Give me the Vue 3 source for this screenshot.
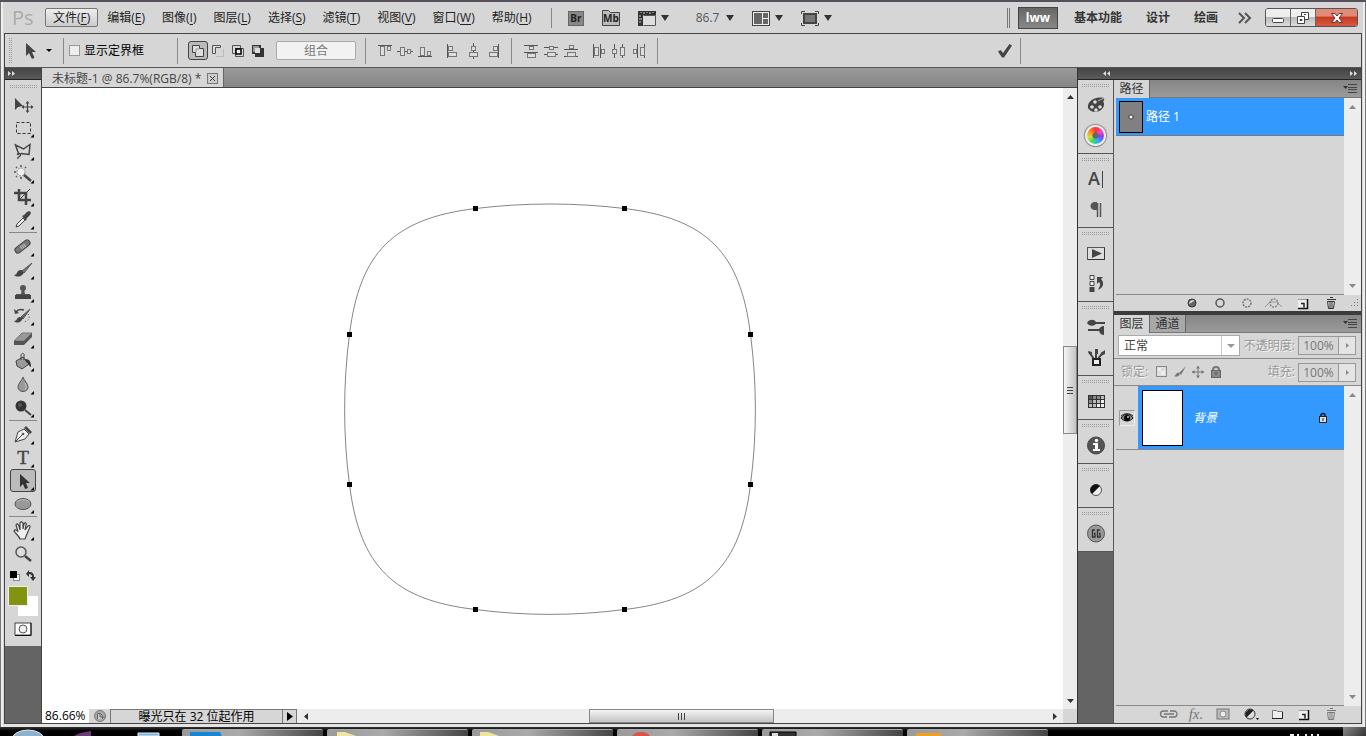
<template>
  <div class="screen">
    <div class="window">
      <header class="menubar">
        <span class="logo">Ps</span>
        <nav class="menus">
          <button v-for="(m, i) in menus" :key="m.key" class="menu" :class="{ active: i === 0 }">{{ m.name }}(<u>{{ m.key }}</u>)</button>
        </nav>
        <i class="vline"></i>
        <div class="app-tools">
          <button class="plain" aria-label="Bridge">
            <svg width="18" height="18" viewBox="0 0 18 18">
              <rect x="1.500" y="2.500" width="15" height="14" fill="#888" stroke="#666" />
              <text x="9" y="13" class="badge-text">Br</text>
            </svg>
          </button>
          <button class="plain" aria-label="Mini Bridge">
            <svg width="18" height="18" viewBox="0 0 18 18">
              <path d="M.5 16.500V1.500h6l2 2h9v13z" fill="#bbb" stroke="#444" />
              <text x="9" y="13" class="badge-text">Mb</text>
            </svg>
          </button>
          <button class="plain with-arrow" aria-label="查看额外内容">
            <svg width="20" height="18" viewBox="0 0 20 18">
              <path d="M1 2h18v4H6v11H1z" fill="#333" />
              <path d="M6.500 6.500h12v10h-12" fill="#ddd" stroke="#555" />
              <path d="M4 3v1M7 3v2M10 3v1M13 3v2M16 3v1M2 7h2M2 10h3M2 13h2" stroke="#ccc" />
            </svg>
            <svg width="8" height="6" viewBox="0 0 8 6"><path d="M0 0h8L4 6z" fill="#333" /></svg>
          </button>
          <label class="zoom-box">
            <select v-model="zoom" aria-label="缩放级别">
              <option>86.7</option>
              <option>100</option>
            </select>
            <svg width="8" height="6" viewBox="0 0 8 6"><path d="M0 0h8L4 6z" fill="#333" /></svg>
          </label>
          <button class="plain with-arrow" aria-label="排列文档">
            <svg width="20" height="18" viewBox="0 0 20 18">
              <rect x="1.500" y="2.500" width="17" height="14" fill="#eee" stroke="#444" />
              <path d="M3 4h8v11H3zM12 4h5v5h-5zM12 10h5v5h-5z" fill="#666" />
            </svg>
            <svg width="8" height="6" viewBox="0 0 8 6"><path d="M0 0h8L4 6z" fill="#333" /></svg>
          </button>
          <button class="plain with-arrow" aria-label="屏幕模式">
            <svg width="20" height="18" viewBox="0 0 20 18">
              <rect x="4" y="5" width="12" height="9" fill="#777" stroke="#444" stroke-width="2" />
              <path d="M1.500 5V2.500H5M15 2.500h3.500V5M18.500 14v2.500H15M5 16.500H1.500V14" fill="none" stroke="#444" />
            </svg>
            <svg width="8" height="6" viewBox="0 0 8 6"><path d="M0 0h8L4 6z" fill="#333" /></svg>
          </button>
        </div>
        <div class="workspaces">
          <i class="double-line"></i>
          <button
            v-for="w in workspaces"
            :key="w"
            class="workspace-btn"
            :class="{ active: workspace === w }"
            @click="workspace = w"
          >{{ w }}</button>
          <button class="plain more" aria-label="更多工作区">
            <svg width="16" height="12" viewBox="0 0 16 12"><path d="M2 1l5 5-5 5M8 1l5 5-5 5" fill="none" stroke="#555" stroke-width="2" /></svg>
          </button>
        </div>
        <div class="win-controls">
          <button class="win-btn" aria-label="最小化">
            <svg width="14" height="12" viewBox="0 0 14 12"><rect x="1.500" y="6.500" width="11" height="4" rx="1" fill="#fff" stroke="#444" /></svg>
          </button>
          <button class="win-btn" aria-label="还原">
            <svg width="14" height="14" viewBox="0 0 14 14">
              <path d="M5.500 1.500h7v7h-7z" fill="#fff" stroke="#444" />
              <path d="M1.500 5.500h7v7h-7z" fill="#fff" stroke="#444" />
              <path d="M4 8.500h2v1H4zM8 3.500h2" stroke="#444" fill="none" />
            </svg>
          </button>
          <button class="win-btn close" aria-label="关闭">
            <svg width="14" height="12" viewBox="0 0 14 12"><path d="M1.500 1.500h3.500l2 2.500 2-2.500h3.500L9 6l3.500 4.500H9L7 8l-2 2.500H1.500L5 6z" fill="#fff" stroke="#633" /></svg>
          </button>
        </div>
      </header>

      <div class="frame">
        <div class="options">
          <i class="grip-v"></i>
          <button class="plain tool-picker" aria-label="工具预设">
            <svg width="14" height="18" viewBox="0 0 14 18"><path d="M3 1v13l3-3 3 6 2.500-1.200L9 10h4z" fill="#444" /></svg>
            <svg width="6" height="3" viewBox="0 0 6 3"><path d="M0 0h6L3 3z" /></svg>
          </button>
          <i class="vline"></i>
          <label class="check">
            <input v-model="showBounds" type="checkbox" />
            <span>显示定界框</span>
          </label>
          <i class="vline"></i>
          <div class="icon-row">
            <button v-for="(ic, i) in pathOps" :key="i" class="op-btn" :class="{ active: i === 0 }" :aria-label="ic.name">
              <svg width="16" height="16" viewBox="0 0 16 16" v-html="ic.body"></svg>
            </button>
          </div>
          <button class="combine">组合</button>
          <i class="vline"></i>
          <template v-for="(set, s) in alignSets" :key="s">
            <div class="align-row" :class="{ last: s % 2 === 1 }">
              <button v-for="(body, i) in set" :key="i" class="op-btn" aria-label="对齐">
                <svg width="16" height="16" viewBox="0 0 16 16" v-html="body"></svg>
              </button>
            </div>
            <i v-if="s % 2 === 1" class="vline"></i>
          </template>
          <div class="commit">
            <button class="plain" aria-label="提交">
              <svg width="16" height="16" viewBox="0 0 16 16"><path d="M1 8.500L3.500 7 6 10l6.500-9L15 2.500 7 14.500H5z" fill="#444" /></svg>
            </button>
            <i class="vline"></i>
          </div>
        </div>

        <div class="body">
          <aside class="toolbox">
            <div class="dark-head"><svg width="8" height="5" viewBox="0 0 8 5"><path d="M0 0l3 2.500L0 5zM4 0l3 2.500L4 5z" fill="#ddd" /></svg></div>
            <div class="tools">
              <i class="grip-h"></i>
              <template v-for="(t, i) in tools" :key="i">
                <hr v-if="t.sep" />
                <button v-else class="tool" :class="{ active: t.active }" :aria-label="t.name">
                  <svg width="24" height="20" viewBox="0 0 24 20">
                    <g v-html="t.body"></g>
                    <path v-if="!t.single" d="M23 16v3.500h-3.500z" fill="#000" />
                  </svg>
                </button>
              </template>
              <button class="plain" aria-label="前景色和背景色">
                <svg width="32" height="54" viewBox="0 0 32 54">
                  <rect x="6.500" y="9.500" width="6" height="6" fill="#fff" stroke="#888" />
                  <rect x="3" y="6" width="7" height="7" fill="#000" />
                  <path d="M19 9l3-4v2c4 0 5 2 5 5h2l-3 4-3-4h2c0-2-1-3-3-3v3z" fill="#333" />
                  <rect x="11" y="31" width="20" height="20" fill="#fff" />
                  <rect x="1.500" y="21.500" width="19" height="19" fill="#82930f" stroke="#eee" />
                </svg>
              </button>
              <button class="plain mask" aria-label="快速蒙版">
                <svg width="18" height="14" viewBox="0 0 18 14">
                  <rect x="1" y="1" width="16" height="12" fill="#fff" stroke="#444" />
                  <path d="M17 1v12.500H1" fill="none" stroke="#111" />
                  <circle cx="9" cy="7" r="4" fill="#eee" stroke="#555" />
                </svg>
              </button>
            </div>
          </aside>

          <main class="document">
            <div class="doc-tabs">
              <div class="doc-tab">
                <span>未标题-1 @ 86.7%(RGB/8) *</span>
                <button class="plain" aria-label="关闭文档">
                  <svg width="11" height="11" viewBox="0 0 11 11"><rect x=".5" y=".5" width="10" height="10" fill="#ccc" stroke="#777" /><path d="M3 3l5 5M8 3l-5 5" stroke="#444" /></svg>
                </button>
              </div>
            </div>
            <div class="canvas-row">
              <svg class="canvas">
                <g transform="translate(-42 -88)">
                  <path :d="outline" fill="none" stroke="#666" stroke-width=".8" />
                  <rect v-for="(p, i) in anchors" :key="i" :x="p[0] - 2" :y="p[1] - 2" width="5" height="5" />
                </g>
              </svg>
              <div class="scroll-v">
                <button class="plain" aria-label="向上"><svg width="7" height="4" viewBox="0 0 7 4"><path d="M0 4h7L3.500 0z" fill="#333" /></svg></button>
                <div class="track-v"><div class="thumb-v"><i></i></div></div>
                <button class="plain" aria-label="向下"><svg width="7" height="4" viewBox="0 0 7 4"><path d="M0 0h7L3.500 4z" fill="#333" /></svg></button>
              </div>
            </div>
            <div class="status">
              <input v-model="zoomText" class="zoom-input" aria-label="缩放" />
              <span class="status-icon">
                <svg width="12" height="12" viewBox="0 0 12 12"><circle cx="6" cy="6" r="5.500" fill="#aaa" stroke="#777" /><path d="M3.500 9V3.500h3l2 2V9M6 4v3h5" fill="#ccc" stroke="#666" /></svg>
              </span>
              <span class="status-text">曝光只在 32 位起作用</span>
              <button class="status-arrow" aria-label="状态选项"><svg width="6" height="9" viewBox="0 0 6 9"><path d="M0 0v9l6-4.500z" /></svg></button>
              <div class="scroll-h">
                <button class="plain" aria-label="向左"><svg width="4" height="7" viewBox="0 0 4 7"><path d="M4 0v7L0 3.500z" fill="#333" /></svg></button>
                <div class="track-h"><div class="thumb-h"><i></i></div></div>
                <button class="plain" aria-label="向右"><svg width="4" height="7" viewBox="0 0 4 7"><path d="M0 0v7l4-3.500z" fill="#333" /></svg></button>
              </div>
              <i class="corner"></i>
            </div>
          </main>

          <aside class="right">
            <div class="dark-head right-head">
              <svg width="8" height="5" viewBox="0 0 8 5"><path d="M3 0v5L0 2.500zM7 0v5L4 2.500z" fill="#ddd" /></svg>
              <svg width="8" height="5" viewBox="0 0 8 5"><path d="M0 0l3 2.500L0 5zM4 0l3 2.500L4 5z" fill="#ddd" /></svg>
            </div>
            <div class="right-body">
              <div class="dock">
                <div v-for="(g, i) in dock" :key="i" class="dock-group">
                  <i class="grip-h"></i>
                  <button v-for="d in g" :key="d.name" class="dock-btn" :aria-label="d.name">
                    <i v-if="d.wheel" class="wheel"></i>
                    <svg v-else width="20" height="20" viewBox="0 0 20 20" v-html="d.body"></svg>
                  </button>
                </div>
              </div>

              <div class="panels">
                <section class="panel paths">
                  <div class="tabs">
                    <button class="tab active">路径</button>
                    <button class="plain panel-menu" aria-label="面板菜单"><svg width="14" height="9" viewBox="0 0 14 9"><path d="M0 2h5L2.500 5z" fill="#333" /><path d="M5 .5h9M5 3.500h9M5 5.500h9M5 8.500h9" stroke="#444" /></svg></button>
                  </div>
                  <div class="list-row">
                    <div class="list">
                      <div class="path-item">
                        <svg width="24" height="32" viewBox="0 0 24 32"><rect x=".5" y=".5" width="23" height="31" fill="#808080" stroke="#000" /><path d="M12 13.500l2.500 2.500-2.500 2.500L9.500 16z" fill="#fff" stroke="#222" /></svg>
                        <span>路径 1</span>
                      </div>
                    </div>
                    <div class="panel-scroll">
                      <svg width="7" height="4" viewBox="0 0 7 4"><path d="M0 4h7L3.500 0z" fill="#888" /></svg>
                      <svg width="7" height="4" viewBox="0 0 7 4"><path d="M0 0h7L3.500 4z" fill="#888" /></svg>
                    </div>
                  </div>
                  <div class="panel-foot">
                    <button v-for="(b, i) in pathFoot" :key="i" class="plain" aria-label="路径操作"><svg width="20" height="14" viewBox="0 0 20 14" v-html="b"></svg></button>
                    <svg width="10" height="10" viewBox="0 0 10 10"><path d="M8 1h1v1H8zM8 4h1v1H8zM5 4h1v1H5zM8 7h1v1H8zM5 7h1v1H5zM2 7h1v1H2z" fill="#777" /></svg>
                  </div>
                </section>

                <section class="panel layers">
                  <div class="tabs">
                    <button class="tab active">图层</button>
                    <button class="tab">通道</button>
                    <button class="plain panel-menu" aria-label="面板菜单"><svg width="14" height="9" viewBox="0 0 14 9"><path d="M0 2h5L2.500 5z" fill="#333" /><path d="M5 .5h9M5 3.500h9M5 5.500h9M5 8.500h9" stroke="#444" /></svg></button>
                  </div>
                  <div class="prop-row">
                    <div class="blend">
                      <select v-model="blend" aria-label="混合模式">
                        <option>正常</option>
                        <option>溶解</option>
                      </select>
                      <span class="blend-arrow"><svg width="8" height="4" viewBox="0 0 8 4"><path d="M0 0h8L4 4z" fill="#999" /></svg></span>
                    </div>
                    <label class="field">
                      <span>不透明度:</span>
                      <input value="100%" disabled />
                      <b><svg width="3" height="5" viewBox="0 0 3 5"><path d="M0 0v5l3-2.500z" fill="#888" /></svg></b>
                    </label>
                  </div>
                  <div class="prop-row lock-row">
                    <span class="faded">锁定:</span>
                    <div class="locks">
                      <button v-for="(b, i) in locks" :key="i" class="plain" aria-label="锁定选项"><svg width="14" height="14" viewBox="0 0 14 14" v-html="b"></svg></button>
                    </div>
                    <label class="field">
                      <span>填充:</span>
                      <input value="100%" disabled />
                      <b><svg width="3" height="5" viewBox="0 0 3 5"><path d="M0 0v5l3-2.500z" fill="#888" /></svg></b>
                    </label>
                  </div>
                  <div class="list-row">
                    <div class="list">
                      <div class="layer-item">
                        <button class="eye" aria-label="可见性">
                          <svg width="16" height="16" viewBox="0 0 16 16">
                            <path d="M.5 15.500V.5h15" fill="none" stroke="#999" />
                            <path d="M15.500 1v14.500H1" fill="none" stroke="#eee" />
                            <path d="M2 8c3-5 9-5 12 0-3 4-9 4-12 0z" fill="#888" stroke="#111" />
                            <circle cx="8" cy="8" r="3" fill="#000" />
                            <circle cx="9" cy="7" r="1" fill="#ccc" />
                            <path d="M2 6c3-3 9-3 12 0" fill="none" stroke="#222" />
                          </svg>
                        </button>
                        <div class="layer-main">
                          <i class="thumb"></i>
                          <em>背景</em>
                          <svg width="10" height="11" viewBox="0 0 10 11"><path d="M3 5V3.500a2 2 0 0 1 4 0V5" fill="none" stroke="#113" stroke-width="1.500" /><rect x="1.500" y="4.500" width="7" height="6" fill="#ddd" stroke="#222" /><path d="M5 6v3" stroke="#222" /></svg>
                        </div>
                      </div>
                    </div>
                    <div class="panel-scroll">
                      <svg width="7" height="4" viewBox="0 0 7 4"><path d="M0 4h7L3.500 0z" fill="#888" /></svg>
                      <svg width="7" height="4" viewBox="0 0 7 4"><path d="M0 0h7L3.500 4z" fill="#888" /></svg>
                    </div>
                  </div>
                  <div class="panel-foot layer-foot">
                    <button class="plain" aria-label="链接图层"><svg width="20" height="14" viewBox="0 0 20 14" v-html="linkIcon"></svg></button>
                    <button class="fx" aria-label="图层样式">fx.</button>
                    <button v-for="(b, i) in layerFoot" :key="i" class="plain" aria-label="图层操作"><svg width="20" height="14" viewBox="0 0 20 14" v-html="b"></svg></button>
                  </div>
                </section>
              </div>
            </div>
          </aside>
        </div>
      </div>
    </div>

    <footer class="taskbar">
      <svg width="178" height="9" viewBox="0 0 178 9">
        <ellipse cx="28" cy="14" rx="17" ry="11" fill="#8fb0cc" stroke="#dde8f0" />
        <path d="M74 9c5-3 10-4 17-5v5z" fill="#6d3a78" />
        <path d="M138 6h21v3h-21z" fill="#7fb4dc" stroke="#e4f0fa" />
      </svg>
      <div v-for="(t, i) in tasks" :key="i" class="task">
        <svg width="40" height="7" viewBox="0 0 40 7" v-html="t"></svg>
      </div>
      <div class="tray">
        <svg width="32" height="9" viewBox="0 0 32 9"><path d="M1 8h4M8 8h2M16 8h2M22 8h2M28 8h2" stroke="#eee" stroke-width="2" /></svg>
        <i class="show-desktop"></i>
      </div>
    </footer>
  </div>
</template>

<script setup>
import { ref } from 'vue'

const zoom = ref('86.7')
const zoomText = ref('86.66%')
const showBounds = ref(false)
const blend = ref('正常')
const workspace = ref('lww')

const workspaces = ['lww', '基本功能', '设计', '绘画']

const menus = [
  { name: '文件', key: 'F' },
  { name: '编辑', key: 'E' },
  { name: '图像', key: 'I' },
  { name: '图层', key: 'L' },
  { name: '选择', key: 'S' },
  { name: '滤镜', key: 'T' },
  { name: '视图', key: 'V' },
  { name: '窗口', key: 'W' },
  { name: '帮助', key: 'H' },
]

const pathOps = [
  { name: '添加', body: '<path d="M2.500 2.500h7v3h4v8h-8v-4h-3z" fill="#ddd" stroke="#444"/><path d="M6 9V6h3" fill="none" stroke="#999"/>' },
  { name: '减去', body: '<path d="M2.500 10.500v-8h8v2h-5v6z" fill="#ddd" stroke="#555"/><path d="M6 13.500h7.500V6" fill="none" stroke="#bbb"/>' },
  { name: '交叉', body: '<path d="M2.500 2.500h8v8h-8zM5.500 5.500h8v8h-8z" fill="none" stroke="#555"/><rect x="6" y="6" width="5" height="5" fill="#eee" stroke="#000" stroke-width="1.500"/>' },
  { name: '排除', body: '<path d="M2 2h9v3h3v9H5v-3H2z" fill="#333"/><rect x="5" y="5" width="5" height="5" fill="#ddd"/><path d="M3 3h6v2H5v4H3z" fill="#999"/>' },
]

const box = (x, y, w, h) => `<rect x="${x}.5" y="${y}.5" width="${w}" height="${h}" fill="#ddd" stroke="#777"/>`
const line = (d) => `<path d="${d}" stroke="#555" fill="none"/>`

const alignSets = [
  [
    line('M1 2.500h14') + box(3, 3, 4, 9) + box(10, 3, 3, 4),
    line('M0 8.500h16') + box(3, 4, 4, 8) + box(10, 6, 3, 4),
    line('M1 13.500h14') + box(3, 4, 4, 8) + box(10, 8, 3, 4),
  ],
  [
    line('M2.500 1v14') + box(3, 3, 4, 4) + box(3, 9, 8, 4),
    line('M8.500 0v16') + box(6, 3, 4, 4) + box(4, 9, 8, 4),
    line('M13.500 1v14') + box(8, 3, 4, 4) + box(4, 9, 8, 4),
  ],
  [
    line('M1 2.500h14M1 9.500h14') + box(6, 3, 4, 3) + box(4, 10, 8, 4),
    line('M1 4.500h14M1 11.500h14') + box(6, 3, 4, 3) + box(4, 9, 8, 4),
    line('M1 6.500h14M1 13.500h14') + box(6, 2, 4, 3) + box(4, 9, 8, 4),
  ],
  [
    line('M2.500 1v14M9.500 1v14') + box(3, 4, 4, 8) + box(10, 6, 3, 4),
    line('M3.500 1v14M11.500 1v14') + box(1, 6, 4, 4) + box(9, 4, 4, 8),
    line('M6.500 1v14M13.500 1v14') + box(2, 6, 3, 4) + box(9, 4, 4, 8),
  ],
]

const tools = [
  { name: '移动', single: true, body: '<path d="M4 3v12l3-3 5-1z" fill="#444"/><path d="M16.500 7v10M11.500 12h10" stroke="#444" stroke-width="1.200"/><path d="M14.500 8.500l2-2.500 2 2.500zM14.500 15.500l2 2.500 2-2.500zM13 10l-2.500 2 2.500 2zM20 10l2.500 2-2.500 2z" fill="#444"/>' },
  { name: '矩形选框', body: '<rect x="5.500" y="4.500" width="14" height="11" fill="none" stroke="#333" stroke-dasharray="3 2"/>' },
  { name: '套索', body: '<path d="M8 14L4.500 4l8 4 6.500-4.500-1 10-8-1" fill="none" stroke="#444" stroke-width="1.500"/><path d="M6 14c2-3 5-1 3 1s-3 1-2 3" fill="none" stroke="#444" stroke-width="1.300"/>' },
  { name: '魔棒', body: '<path d="M12 10l8 7" stroke="#444" stroke-width="2.500"/><circle cx="10" cy="8" r="4" fill="#eee" stroke="#888" stroke-dasharray="2 1"/><path d="M10 1v2M10 13v2M3 8h2M5 3l1 1M15 3l-1 1M5 13l1-1" stroke="#555" stroke-width="1.500"/>' },
  { name: '裁剪', body: '<path d="M8 2v11h12M3 6h12v12" fill="none" stroke="#444" stroke-width="2.500"/><path d="M8 13L19 2" stroke="#444"/>' },
  { name: '吸管', body: '<path d="M5 17l1-3 6-6 2 2-6 6z" fill="#eee" stroke="#444"/><path d="M11 6l2-1 3-3c3-2 5 1 3 3l-3 3-1 3z" fill="#444"/>' },
  { sep: true },
  { name: '修复画笔', body: '<path d="M7 13l9-7" stroke="#444" stroke-width="7" stroke-linecap="round"/><path d="M7 13l9-7" stroke="#777" stroke-width="5" stroke-linecap="round"/><path d="M10 11l4-3" stroke="#bbb" stroke-width="4" stroke-dasharray="1 1"/>' },
  { name: '画笔', body: '<path d="M3 15c4 0 2-5 7-5 3 0 4 3 1 5-2 2-6 2-8 0z" fill="#444"/><path d="M11 11l10-8-8 10z" fill="#777" stroke="#555"/>' },
  { name: '图章', body: '<circle cx="12" cy="5" r="3" fill="#555"/><path d="M11 6h2l1 5h5v3H5v-3h5z" fill="#555"/><path d="M4 12h16v4H4z" fill="#444"/>' },
  { name: '历史画笔', body: '<path d="M3 15c4 0 2-4 6-4 3 0 3 3 1 4-2 2-5 2-7 0z" fill="#444"/><path d="M10 11l9-8-7 10z" fill="#666" stroke="#555"/><path d="M5 6c2-3 5-3 8-2" fill="none" stroke="#444" stroke-width="1.500"/><path d="M3 3l1 5 4-1z" fill="#444"/><path d="M17 8c3 4 0 7-4 8" fill="none" stroke="#555" stroke-dasharray="1 2"/>' },
  { name: '橡皮擦', body: '<path d="M3 12l8-8h10l-8 8z" fill="#999" stroke="#777"/><path d="M3 12h10v4H3zM13 12l8-8v4l-8 8z" fill="#555"/>' },
  { name: '油漆桶', body: '<path d="M5 9l7-4 6 7-7 5-5-3z" fill="#999" stroke="#444"/><path d="M10 8V4c0-4 4-3 3 0v4" fill="none" stroke="#444"/><path d="M14 7c5 0 6 3 6 8-3-1-2-4-5-5z" fill="#333"/>' },
  { name: '模糊', body: '<path d="M12 2c1 4 5 6 5 10 0 6-10 6-10 0 0-4 4-6 5-10z" fill="#999" stroke="#555"/><path d="M14 8c1 2 2 5 0 7" fill="none" stroke="#ccc"/>' },
  { name: '减淡', body: '<circle cx="10" cy="8" r="5.500" fill="#333"/><circle cx="9" cy="7" r="2" fill="#555"/><path d="M14 12l6 5" stroke="#444" stroke-width="2"/>' },
  { sep: true },
  { name: '钢笔', body: '<path d="M4 17l3-10 6-3 5 5-4 5z" fill="#eee" stroke="#444"/><path d="M13 3l2-2 6 6-2 2z" fill="#444"/><path d="M5 16l6-6" stroke="#444"/><circle cx="12" cy="9" r="1.300" fill="#555"/>' },
  { name: '文字', body: '<text x="12" y="16" text-anchor="middle" font-family="Liberation Serif, serif" font-size="19" fill="#444" stroke="#444" stroke-width=".4">T</text>' },
  { name: '路径选择', active: true, body: '<path d="M9 3v13l3-3 2 5 3-1-2-5h4z" fill="#333"/>' },
  { name: '椭圆', body: '<ellipse cx="12" cy="10" rx="8" ry="5.500" fill="#999" stroke="#555"/><path d="M6 8c2-3 10-3 12 0" fill="none" stroke="#bbb"/>' },
  { sep: true },
  { name: '抓手', body: '<path d="M9 18c-1-3-4-5-6-8 1-2 3-1 4 1L5 4c1-2 2-1 3 1l1 4V2c1-2 2-1 3 0v6l1-5c1-2 3-1 2 1l-1 5 3-4c2-1 2 0 2 1l-3 7-2 5z" fill="#eee" stroke="#444" stroke-width="1.200"/>' },
  { name: '缩放', single: true, body: '<circle cx="10" cy="8" r="5" fill="#ddd" stroke="#555" stroke-width="1.500"/><path d="M14 12l6 5" stroke="#444" stroke-width="2.500"/>' },
]

const dock = [
  [
    { name: '颜色', body: '<path d="M2 13C1 7 8 1 18 3c1 2-2 4 0 5 1 9-12 12-16 5z" fill="#444"/><circle cx="6" cy="12" r="1.800" fill="#ddd"/><circle cx="10" cy="15" r="1.800" fill="#ddd"/><circle cx="9" cy="7" r="1.800" fill="#ddd"/><circle cx="14" cy="12" r="1.800" fill="#ddd"/><path d="M12 6l6-3" stroke="#bbb"/>' },
    { name: 'Kuler', wheel: true },
  ],
  [
    { name: '字符', body: '<text x="2" y="16" font-family="Open Sans, sans-serif" font-size="18" font-weight="600" fill="#444">A</text><path d="M16.500 2v17" stroke="#444"/>' },
    { name: '段落', body: '<path d="M14.500 4v14M11.500 4v14" stroke="#555" stroke-width="1.500"/><path d="M15 3H9C3 3 3 11 9 11h2V3z" fill="#555"/>' },
  ],
  [
    { name: '动作', body: '<rect x="1.500" y="4.500" width="17" height="12" fill="#ddd" stroke="#555"/><path d="M18.500 5v11.500H2" fill="none" stroke="#333"/><path d="M6 6v9l10-4.500z" fill="#444"/>' },
    { name: '历史记录', body: '<path d="M4 2.500h4v4H4zM4 8.500h4v4H4z" fill="#eee" stroke="#444"/><path d="M3.500 14h5v5h-5z" fill="#444"/><path d="M11 4h6l-2 2c4 4 2 9-3 11 2-4 3-6 1-8l-2 2z" fill="#444"/>' },
  ],
  [
    { name: '画笔', body: '<path d="M1 6c2-4 7-4 9-1h9v2h-9c-3 3-7 2-9-1zM2 12h11c2-3 4-3 5-3v9c-2 0-4-1-5-4H2z" fill="#444"/>' },
    { name: '画笔预设', body: '<path d="M8 12L3 5M10 11V3M12 12l5-7" stroke="#444" stroke-width="2"/><path d="M2 4l4 1v3L3 7zM9 2h3v5H9zM15 6l4-3v4l-4 2z" fill="#444"/><path d="M7 12h7v6H7z" fill="#eee" stroke="#222" stroke-width="2"/>' },
  ],
  [
    { name: '色板', body: '<rect x="2" y="4" width="17" height="13" fill="#333"/><path d="M3 5h3v3H3z" fill="#555"/><path d="M7 5h3v3H7zM11 5h3v3h-3zM3 9h3v3H3z" fill="#888"/><path d="M15 5h3v3h-3zM7 9h3v3H7zM11 9h3v3h-3zM3 13h3v3H3zM7 13h3v3H7z" fill="#bbb"/><path d="M15 9h3v3h-3zM11 13h3v3h-3zM15 13h3v3h-3z" fill="#eee"/>' },
  ],
  [
    { name: '信息', body: '<circle cx="10" cy="10.500" r="8.500" fill="#555" stroke="#444"/><path d="M7 8h5v6h2v2H7v-2h2v-4H7z" fill="#fff"/><circle cx="10.500" cy="5.500" r="1.700" fill="#fff"/>' },
  ],
  [
    { name: '调整', body: '<circle cx="10" cy="11" r="5.500" fill="#eee" stroke="#555"/><path d="M6 15A5.500 5.500 0 0 1 14 7z" fill="#111"/>' },
  ],
  [
    { name: '扩展', body: '<circle cx="10" cy="10.500" r="8.500" fill="#999" stroke="#555"/><path d="M9 7H6.500v7H9v-3.500H8M14 7h-2.500v7H14v-3.500h-1" fill="none" stroke="#333" stroke-width="1.300"/>' },
  ],
]

const newIcon = '<path d="M5 3h10v9H5z" fill="#eee"/><path d="M5 3.500h10" stroke="#999"/><path d="M14.500 3v9.500H5" stroke="#111" stroke-width="1.500" fill="none"/><path d="M8 7.500h3v4" stroke="#222" stroke-width="1.500" fill="none"/>'
const trash = (c) => `<path d="M6.500 5.500h7l-1 7h-5z" fill="#ddd" stroke="${c}"/><path d="M6 3.500h9M9 1.500h3M9 6v6M11 6v6" stroke="${c}"/>`

const pathFoot = [
  '<circle cx="11" cy="7" r="4" fill="#666" stroke="#333"/><path d="M8 8C8.500 4.500 11 3.500 13.500 4.500z" fill="#eee"/>',
  '<circle cx="11" cy="7" r="4" fill="none" stroke="#555" stroke-width="1.500"/>',
  '<circle cx="10" cy="7" r="4" fill="none" stroke="#777" stroke-width="1.500" stroke-dasharray="2 1"/>',
  '<path d="M0 11l5-5h7l5 5" fill="none" stroke="#999"/><circle cx="9" cy="7" r="4" fill="none" stroke="#888" stroke-width="1.500" stroke-dasharray="2 1"/>',
  newIcon,
  trash('#333'),
]

const linkIcon = '<path d="M9 4H4.500a2.500 2.500 0 0 0 0 6H8M10 10h5a2.500 2.500 0 0 0 0-6h-4M5 7h10" fill="none" stroke="#777" stroke-width="1.300"/>'

const layerFoot = [
  '<rect x="4" y="2" width="12" height="10" fill="#bbb" stroke="#777"/><circle cx="10" cy="7" r="3" fill="#eee" stroke="#888"/>',
  '<circle cx="10" cy="7" r="5" fill="#ddd" stroke="#333"/><path d="M6.500 10.500a5 5 0 0 1 7-7z" fill="#222"/><path d="M16 11h3l-1.500 2z"/>',
  '<path d="M5.500 11.500v-8h4l1 1h5v7z" fill="#eee" stroke="#777"/><path d="M15.500 5v6.500H5" fill="none" stroke="#222"/>',
  newIcon,
  trash('#777'),
]

const locks = [
  '<rect x="1.500" y="1.500" width="10" height="10" fill="#ddd" stroke="#888"/><path d="M3 3h3v3H3zM6 6h4v4H6z" fill="#eee"/>',
  '<path d="M1 11c2 0 2-4 5-3 2 2-2 5-5 3zM6 8l7-7-5 9z" fill="#777"/>',
  '<path d="M7 1v12M1 7h12" stroke="#777"/><path d="M5 3.500L7 1l2 2.500zM5 10.500L7 13l2-2.500zM3.500 5L1 7l2.500 2zM10.500 5L13 7l-2.500 2z" fill="#777"/>',
  '<path d="M4 6V5c0-4 6-4 6 0v1" fill="none" stroke="#777" stroke-width="2"/><rect x="2.500" y="5.500" width="9" height="7" fill="#888" stroke="#666"/><path d="M7 7v3" stroke="#444"/>',
]

const tasks = [
  '<path d="M8 2h30l2 5H8z" fill="#1686d4"/>',
  '<path d="M10 2h8l14 5H10z" fill="#efe5a0"/>',
  '<path d="M8 2h8l14 5H8z" fill="#efe5a0"/>',
  '<ellipse cx="24" cy="7" rx="9" ry="5" fill="#d9534f"/>',
  '<path d="M8 2h26v5H8z" fill="#333" stroke="#000"/><path d="M10 3h6v4h-6z" fill="#ddd"/>',
  '<path d="M10 3h24v4H8z" fill="#f0a020"/>',
]

const anchors = [
  [475, 208], [624, 208], [750, 334], [750, 484],
  [624, 609], [475, 609], [349, 484], [349, 334],
]

const outline = [
  'M475.5 208.500C525 202.500 575 202.500 624.500 208.500',
  'C706.5 218.500 740.500 252.500 750.500 334.500',
  'C757 384 757 435 750.500 484.500',
  'C740.5 566 706.500 600 624.500 609.500',
  'C575 616 525 616 475.500 609.500',
  'C393.5 600 359.500 566 349.500 484.500',
  'C343 435 343 384 349.500 334.500',
  'C359.5 252.500 393.500 218.500 475.500 208.500z',
].join('')
</script>

<style>
html,
body {
  margin: 0;
  background: #111;
}
</style>

<style scoped>
.screen {
  min-height: 100vh;
  display: flex;
  flex-direction: column;
  font-family: "Open Sans", "Noto Sans CJK SC", sans-serif;
  font-size: 12px;
  line-height: 16px;
  color: #222;
}

.screen * { box-sizing: border-box; }
svg { display: block; flex: none; }

button,
input,
select {
  font: inherit;
  color: inherit;
  margin: 0;
  padding: 0;
  border: 0;
  border-radius: 0;
  background: none;
  appearance: none;
  outline: none;
}

.plain {
  display: flex;
  align-items: center;
  justify-content: center;
}

.window {
  flex: 1;
  display: flex;
  flex-direction: column;
  padding: 0 4px 3px;
  background: #d6d6d6;
  border-top: 2px solid #55505a;
  box-shadow: inset 1px 0 #777, inset -1px 0 #777, inset 3px 0 #eee, inset -3px 0 #eee, inset 0 -3px #e4e4e4;
}

.vline {
  width: 1px;
  height: 26px;
  background: #888;
  flex: none;
}

/* menu bar */
.menubar {
  height: 31px;
  display: flex;
  align-items: center;
}

.menubar .vline { height: 20px; margin: 0 15px 0 11px; }

.logo {
  width: 41px;
  padding-left: 8px;
  font-size: 20px;
  color: #aaa;
}

.menus { display: flex; gap: 1px; }

.menu {
  height: 19px;
  padding: 0 7px;
  border: 1px solid transparent;
  border-radius: 2px;
  white-space: nowrap;
  line-height: 16px;
}

.menu.active {
  border-color: #777;
  background: linear-gradient(#eee, #ccc);
}

.menu u { text-underline-offset: 2px; }

.app-tools {
  display: flex;
  align-items: center;
  gap: 17px;
}

.with-arrow,
.zoom-box {
  display: flex;
  align-items: center;
  gap: 4px;
}

.zoom-box { padding-left: 10px; color: #555; }
.zoom-box select { width: 26px; }

.badge-text {
  font-size: 10px;
  font-weight: 700;
  text-anchor: middle;
  fill: #222;
}

.workspaces {
  margin-left: auto;
  display: flex;
  align-items: center;
  gap: 8px;
}

.double-line {
  width: 3px;
  height: 20px;
  border: solid #777;
  border-width: 0 1px;
}

.workspace-btn {
  height: 22px;
  padding: 0 8px;
  font-weight: 700;
  white-space: nowrap;
  color: #333;
}

.workspace-btn.active {
  padding: 0 7px;
  border: 1px solid #444;
  background: linear-gradient(#666, #888);
  color: #fff;
}

.more { margin-left: 3px; }

.win-controls {
  display: flex;
  margin: 0 4px 0 12px;
  border: 1px solid #555;
  border-radius: 3px;
  overflow: hidden;
}

.win-btn {
  width: 25px;
  height: 17px;
  display: flex;
  align-items: center;
  justify-content: center;
  border-right: 1px solid #666;
  background: linear-gradient(#eee 45%, #bbb 50%, #ddd);
}

.win-btn.close {
  width: 41px;
  border: 0;
  background: linear-gradient(#e08a78 40%, #c63a22 50%, #d85a40);
}

/* options bar */
.frame {
  flex: 1;
  display: flex;
  flex-direction: column;
  border: 1px solid #444;
  background: #d6d6d6;
}

.options {
  height: 34px;
  display: flex;
  align-items: center;
  border-bottom: 1px solid #555;
}

.grip-v,
.grip-h {
  background:
    repeating-linear-gradient(90deg, transparent 0 1px, #d6d6d6 1px 2px),
    repeating-linear-gradient(#999 0 1px, transparent 1px 2px);
}

.grip-v {
  width: 3px;
  height: 25px;
  margin-left: 4px;
}

.tool-picker { width: 51px; gap: 9px; }

.check {
  width: 113px;
  padding-left: 5px;
  display: flex;
  align-items: center;
  gap: 4px;
  color: #000;
}

.check input {
  width: 11px;
  height: 11px;
  border: 1px solid #999;
  background: #eee;
}

.icon-row { display: flex; padding-left: 10px; width: 98px; }
.align-row { display: flex; padding: 0 4px 0 9px; }
.align-row.last { padding: 0 8px 0 4px; }

.op-btn {
  width: 20px;
  height: 19px;
  display: flex;
  align-items: center;
  justify-content: center;
}

.op-btn.active {
  border: 1px solid #444;
  border-radius: 3px;
  background: #bbb;
}

.combine {
  width: 80px;
  height: 19px;
  margin-right: 9px;
  border: 1px solid #aaa;
  border-radius: 2px;
  background: #f2f2f2;
  color: #777;
  line-height: 16px;
}

.commit {
  margin-left: auto;
  display: flex;
  align-items: center;
  gap: 7px;
  padding-right: 340px;
}

/* workspace */
.body { flex: 1; display: flex; }

.dark-head {
  height: 12px;
  display: flex;
  align-items: center;
  padding: 0 3px;
  background: linear-gradient(#444, #5a5a5a);
  border-bottom: 1px solid #222;
}

.toolbox {
  width: 37px;
  border-right: 1px solid #444;
  background: #646464;
}

.tools {
  display: flex;
  flex-direction: column;
  align-items: center;
  padding-bottom: 7px;
  background: #d6d6d6;
}

.grip-h {
  width: 27px;
  height: 3px;
  margin: 5px 0;
}

.tool {
  width: 26px;
  height: 23px;
  display: flex;
  align-items: center;
  justify-content: center;
  border: 1px solid transparent;
  border-radius: 3px;
}

.tool.active { border-color: #444; background: #bbb; }

.tools hr {
  width: 28px;
  height: 1px;
  margin: 1px 0 2px;
  border: 0;
  background: #888;
}

.mask { height: 20px; }

.document {
  flex: 1;
  min-width: 0;
  display: flex;
  flex-direction: column;
}

.doc-tabs {
  height: 20px;
  display: flex;
  background: linear-gradient(#9a9a9a, #868686);
  border-bottom: 1px solid #444;
}

.doc-tab {
  display: flex;
  align-items: center;
  gap: 6px;
  padding: 2px 5px 0 10px;
  background: #d6d6d6;
  border-right: 1px solid #666;
  color: #444;
  white-space: nowrap;
}

.canvas-row { flex: 1; display: flex; background: #fff; }
.canvas { flex: 1; width: 0; height: auto; }

.scroll-v {
  width: 14px;
  display: flex;
  flex-direction: column;
  background: #ededed;
}

.scroll-v button { height: 17px; }
.track-v { flex: 1; display: flex; flex-direction: column; }
.track-v::before { content: ""; flex: 241; }
.track-v::after { content: ""; flex: 258; }

.thumb-v,
.thumb-h {
  display: flex;
  align-items: center;
  justify-content: center;
  border: 1px solid #888;
}

.thumb-v { flex: 87; background: linear-gradient(90deg, #f4f4f4, #c4c4c4); }
.thumb-v i { width: 6px; height: 7px; background: repeating-linear-gradient(#444 0 1px, transparent 1px 3px); }

.status {
  height: 14px;
  display: flex;
  align-items: stretch;
  line-height: 14px;
  color: #000;
}

.zoom-input {
  width: 47px;
  height: 14px;
  padding-left: 3px;
  background: #fff;
  line-height: 14px;
}

.status-icon {
  width: 22px;
  display: flex;
  align-items: center;
  justify-content: center;
  border-right: 1px solid #777;
}

.status-text {
  width: 171px;
  text-align: center;
  border-top: 1px solid #777;
  line-height: 13px;
}

.status-arrow {
  width: 15px;
  display: flex;
  align-items: center;
  justify-content: center;
  border: solid #777;
  border-width: 1px 1px 0;
}

.scroll-h { flex: 1; display: flex; background: #ededed; }
.scroll-h button { width: 17px; }
.track-h { flex: 1; display: flex; }
.track-h::before { content: ""; flex: 274; }
.track-h::after { content: ""; flex: 271; }
.thumb-h { flex: 183; background: linear-gradient(#f4f4f4, #c4c4c4); }
.thumb-h i { width: 7px; height: 7px; background: repeating-linear-gradient(90deg, #444 0 1px, transparent 1px 3px); }
.corner { width: 14px; background: #d6d6d6; }

/* right side */
.right {
  width: 284px;
  display: flex;
  flex-direction: column;
  border-left: 1px solid #333;
}

.right-head { justify-content: space-between; padding-left: 25px; }
.right-body { flex: 1; display: flex; background: #646464; }
.dock { width: 36px; border-right: 1px solid #555; }

.dock-group {
  display: flex;
  flex-direction: column;
  align-items: center;
  padding-bottom: 3px;
  border-bottom: 1px solid #555;
  background: #d6d6d6;
}

.dock-group .grip-h { margin: 4px 0 3px; }

.dock-btn {
  width: 30px;
  height: 30px;
  display: flex;
  align-items: center;
  justify-content: center;
}

.wheel {
  width: 21px;
  height: 21px;
  border: 2px solid #eee;
  border-radius: 50%;
  background: radial-gradient(circle, #666 22%, transparent 30%), conic-gradient(#f33, #f4b, #74f, #3af, #3d6, #dd3, #f82, #f33);
  box-shadow: 0 0 1px 1px #888;
}

.panels { flex: 1; min-width: 0; display: flex; flex-direction: column; }
.panel { display: flex; flex-direction: column; background: #d6d6d6; }
.paths { height: 231px; }
.layers { flex: 1; border-top: 4px solid #3c3c3c; }

.tabs {
  height: 18px;
  display: flex;
  background: linear-gradient(#868686, #9a9a9a);
  border-bottom: 1px solid #777;
}

.tab {
  width: 36px;
  height: 17px;
  background: #a8a8a8;
  border-right: 1px solid #666;
  color: #333;
}

.tab.active { background: #d6d6d6; height: 18px; }
.panel-menu { margin: 0 4px 0 auto; }

.list-row { flex: 1; display: flex; padding-left: 2px; }
.list { flex: 1; border-bottom: 1px solid #888; }

.path-item {
  height: 38px;
  padding: 0 3px;
  display: flex;
  align-items: center;
  gap: 3px;
  background: #39f;
  border-bottom: 1px solid #777;
  color: #fff;
}

.panel-scroll {
  width: 17px;
  display: flex;
  flex-direction: column;
  align-items: center;
  justify-content: space-between;
  padding: 7px 0;
  background: #ededed;
}

.panel-foot {
  height: 16px;
  display: flex;
  align-items: center;
  justify-content: flex-end;
  gap: 8px;
  padding-right: 2px;
}

.layer-foot { height: 17px; gap: 7px; padding: 0 20px 2px 0; }

.fx {
  width: 20px;
  height: 15px;
  font-family: "Liberation Serif", serif;
  font-size: 15px;
  font-style: italic;
  line-height: 14px;
  color: #777;
}

.prop-row {
  height: 26px;
  padding: 0 5px 0 4px;
  display: flex;
  align-items: center;
  justify-content: space-between;
  border-bottom: 1px solid #888;
}

.blend {
  display: flex;
  width: 122px;
  height: 21px;
  border: 1px solid #aaa;
  background: #fff;
  color: #444;
}

.blend select { flex: 1; padding-left: 5px; }

.blend-arrow {
  width: 18px;
  display: flex;
  align-items: center;
  justify-content: center;
  border-left: 1px solid #ccc;
}

.field { display: flex; align-items: center; }

.field span,
.faded {
  color: #999;
  text-shadow: 1px 1px #f4f4f4;
  white-space: nowrap;
}

.field input {
  width: 41px;
  height: 19px;
  margin-left: 3px;
  border: 1px solid #999;
  text-align: center;
  color: #777;
}

.field b {
  width: 17px;
  height: 19px;
  display: flex;
  align-items: center;
  justify-content: center;
  border: 1px solid #999;
  border-left: 0;
  background: #e4e4e4;
}

.prop-row.lock-row { height: 27px; padding-left: 7px; }
.locks { display: flex; gap: 4px; margin: 0 auto 0 7px; }

.layer-item { display: flex; height: 64px; border-bottom: 1px solid #888; }

.eye {
  width: 22px;
  display: flex;
  align-items: center;
  justify-content: center;
}

.layer-main {
  flex: 1;
  display: flex;
  align-items: center;
  gap: 10px;
  padding: 0 16px 0 4px;
  background: #39f;
  color: #fff;
}

.layer-main em { flex: 1; }
.thumb { width: 41px; height: 56px; border: 1px solid #000; background: #fff; }

/* taskbar */
.taskbar {
  height: 9px;
  display: flex;
  gap: 4px;
  overflow: hidden;
  background: linear-gradient(#333, #000 4px);
}

.task {
  width: 141px;
  margin-top: 2px;
  border-top: 1px solid #aaa;
  border-radius: 2px 2px 0 0;
  background: linear-gradient(90deg, #999, #aaa 40%, #444);
}

.tray { margin-left: auto; display: flex; gap: 22px; }
.show-desktop { width: 23px; background: linear-gradient(135deg, #888, #333); }
</style>
